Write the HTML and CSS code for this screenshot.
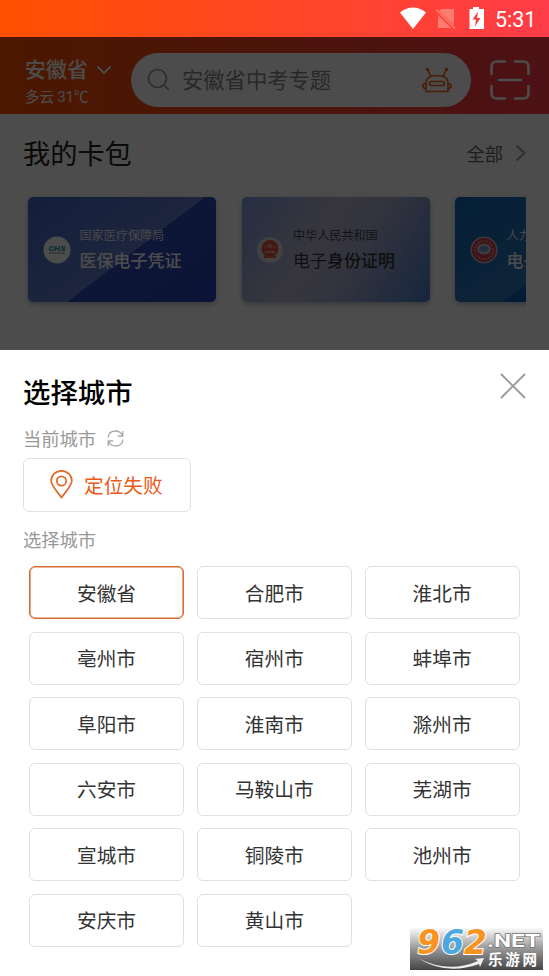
FILE: index.html
```html
<!DOCTYPE html>
<html lang="zh-CN">
<head>
<meta charset="utf-8">
<title>选择城市</title>
<link rel="stylesheet" href="styles.css">
</head>
<body>
<div class="status">
  <svg class="status-icons" width="108" height="37" viewBox="0 0 108 37">
    <path d="M0 12.500Q13 2.500 26 12.500L13 29Z" fill="#fff"/>
    <path d="M41 9h13v19H38V13Z" fill="#ff7d70"/>
    <path d="M36 10.500l19 18.500" stroke="#ff4438" stroke-width="4"/>
    <path d="M36.500 9.500l18.500 19" stroke="#ff8274" stroke-width="1.500"/>
    <path d="M73 7h6v2h5v20H69.500V9H73Z" fill="#fff"/>
    <path d="M78 11.500l-5.500 8h3.500l-1 7 5.500-8.500H77Z" fill="#f3433c"/>
  </svg>
  <span class="clock">5:31</span>
</div>
<div class="home">
  <header class="topbar">
    <div class="place">
      <div class="place-name">安徽省
        <svg width="16" height="10" viewBox="0 0 16 10"><path d="M1.500 1.500L8 8l6.500-6.500" class="stroke-white"/></svg>
      </div>
      <div class="weather">多云 31℃</div>
    </div>
    <div class="search">
      <svg width="24" height="24" viewBox="0 0 24 24" fill="none" stroke="#999" stroke-width="1.700"><circle cx="10.500" cy="10.500" r="9"/><path d="M17 17l5 5"/></svg>
      <span class="query">安徽省中考专题</span>
      <svg class="robot" width="30" height="26" viewBox="0 0 30 26" fill="none" stroke="#f26722" stroke-width="1.700"><path d="M4 24.500V16C4 11 8 8.500 15 8.500S26 11 26 16v8.500ZM8.500 9L6 3M21.500 9L24 3M4 16.500c-2.500 0-3 1-3 2.500s1 2.500 3 2.500M26 16.500c2.500 0 3 1 3 2.500s-1 2.500-3 2.500"/><rect x="7.500" y="14.500" width="15" height="4" rx="2"/><circle cx="5.500" cy="2.500" r="1" fill="#f26722"/><circle cx="24.500" cy="2.500" r="1" fill="#f26722"/></svg>
    </div>
    <svg class="scan" width="40" height="40" viewBox="0 0 40 40" fill="none" stroke="#fff" stroke-width="2.600" stroke-linecap="round"><path d="M1.500 14V7q0-5.500 5.500-5.500h8M25 1.500h8q5.500 0 5.500 5.500v7M38.500 26v7q0 5.500-5.500 5.500h-8M15 38.500H7Q1.500 38.500 1.500 33v-7M9 20h22"/></svg>
  </header>
  <section class="wallet">
    <div class="wallet-head">
      <h2>我的卡包</h2>
      <span class="all">全部</span>
      <svg width="11" height="18" viewBox="0 0 11 18"><path d="M1.500 1.500L9.500 9l-8 7.500" fill="none" stroke="#999" stroke-width="1.900"/></svg>
    </div>
    <div class="cards">
      <article class="card card-health">
        <svg class="seal" width="28" height="28" viewBox="0 0 28 28"><circle cx="14" cy="14" r="13.500" fill="#fff"/><text x="14" y="14.500" class="chs" textLength="17" lengthAdjust="spacingAndGlyphs">CHS</text><path d="M6 17h16" stroke="#99a" stroke-width="1.500" stroke-dasharray="1.500 .5"/></svg>
        <div class="card-text"><p class="issuer">国家医疗保障局</p><p class="doc">医保电子凭证</p></div>
      </article>
      <article class="card card-id">
        <svg class="seal" width="28" height="28" viewBox="0 0 28 28"><circle cx="14" cy="14" r="13" fill="#dad9e0"/><circle cx="14" cy="12.500" r="8.500" fill="#e4523f"/><path d="M14 7l1 2h2l-1.500 1.500.5 2-2-1-2 1 .5-2L11 9h2ZM9 15h10v2H9Z" fill="#eaa59c"/><path d="M8 19q6 4 12 0v3H8Z" fill="#e4523f"/><circle cx="9.500" cy="11" r="1" fill="#eaa59c"/><circle cx="18.500" cy="11" r="1" fill="#eaa59c"/></svg>
        <div class="card-text"><p class="issuer">中华人民共和国</p><p class="doc">电子<b>身份证明</b></p></div>
      </article>
      <article class="card card-social">
        <svg class="seal" width="28" height="28" viewBox="0 0 28 28"><circle cx="14" cy="14" r="13.500" fill="#c9bfce"/><circle cx="14" cy="14" r="12" fill="#cf3b45"/><circle cx="14" cy="14" r="9" fill="none" stroke="#e8a6ac" stroke-width="2" stroke-dasharray="1.500 1.500"/><ellipse cx="14" cy="13" rx="7" ry="5.500" fill="#c5c5d6"/><ellipse cx="14" cy="13" rx="4.500" ry="3" fill="#6c9fc6"/></svg>
        <div class="card-text"><p class="issuer">人力</p><p class="doc">电子</p></div>
      </article>
    </div>
  </section>
  <div class="mask"></div>
</div>
<main class="sheet">
  <div class="sheet-head">
    <h1>选择城市</h1>
    <svg width="26" height="26" viewBox="0 0 26 26"><path d="M1 1l24 24M25 1L1 25" stroke="#999" stroke-width="1.800"/></svg>
  </div>
  <div class="label">当前城市
    <svg width="17" height="17" viewBox="0 0 17 17" fill="none" stroke="#aaa" stroke-width="1.300"><path d="M1 7.500C1.500 3.500 4.500 1 8.500 1c3 0 5.500 1.500 7 4.500M15.800 1v5h-5M16 9.500c-.5 4-3.500 6.500-7.500 6.500-3 0-5.500-1.500-7-4.500M1.200 16v-5h5"/></svg>
  </div>
  <div class="locate">
    <svg width="23" height="29" viewBox="0 0 23 29" fill="none" stroke="#e3682e" stroke-width="1.700"><path d="M11.500 27.500C6 20 1.200 15.500 1.200 10.800a10.300 10 0 0 1 20.600 0C21.800 15.500 17 20 11.500 27.500Z"/><circle cx="11.500" cy="11" r="4.700"/></svg>
    <span>定位失败</span>
  </div>
  <div class="label label-pick">选择城市</div>
  <div class="grid">
    <div class="city city-on">安徽省</div><div class="city">合肥市</div><div class="city">淮北市</div>
    <div class="city">亳州市</div><div class="city">宿州市</div><div class="city">蚌埠市</div>
    <div class="city">阜阳市</div><div class="city">淮南市</div><div class="city">滁州市</div>
    <div class="city">六安市</div><div class="city">马鞍山市</div><div class="city">芜湖市</div>
    <div class="city">宣城市</div><div class="city">铜陵市</div><div class="city">池州市</div>
    <div class="city">安庆市</div><div class="city">黄山市</div>
  </div>
</main>
<svg class="watermark" width="133" height="43" viewBox="0 0 133 43">
  <defs>
    <linearGradient id="shade" x2="0" y2="1"><stop offset="0" stop-color="#fff"/><stop offset=".5" stop-color="#999"/><stop offset="1" stop-color="#444"/></linearGradient>
  </defs>
  <rect width="133" height="43" fill="url(#shade)"/>
  <text y="27" class="digits"><tspan x="7" fill="#f7931e">9</tspan><tspan x="31" fill="#4ba9e0">6</tspan><tspan x="54" fill="#f7931e">2</tspan></text>
  <text x="77" y="20" class="net" textLength="53" lengthAdjust="spacingAndGlyphs">.NET</text>
  <path d="M8 31Q38 47 68 34l-3-2 9-1-4 9-1-3Q36 49 8 31Z" fill="#eee"/>
  <text x="78" y="38" class="site" textLength="49">乐游网</text>
</svg>
</body>
</html>
```
FILE: styles.css
```css
* { box-sizing: border-box; }
body {
  margin: 0;
  width: 549px;
  height: 976px;
  overflow: hidden;
  position: relative;
  background: #fff;
  color: #333;
  font-family: Roboto, "Noto Sans CJK SC", sans-serif;
}
svg { display: block; flex: none; }
h1, h2, p { margin: 0; }
.status {
  height: 37px;
  display: flex;
  align-items: center;
  padding-left: 400px;
  background: linear-gradient(90deg, #ff5000, #ff3c48);
}
.status-icons { width: 108px; margin-right: -13px; }
.clock { color: #fff; font-size: 21.5px; line-height: 37px; padding-top: 1px; }

.home { height: 313px; position: relative; background: #fff; overflow: hidden; }
.mask { position: absolute; inset: 0; background: rgba(0, 0, 0, .7); }
.topbar {
  height: 77px;
  display: flex;
  padding-left: 25px;
  background: linear-gradient(90deg, #ff5000, #ff3c48);
}
.place { width: 106px; color: #fff; padding-top: 19px; }
.place-name {
  display: flex;
  align-items: center;
  gap: 8px;
  font-size: 21px;
  font-weight: 500;
  line-height: 28px;
}
.stroke-white { fill: none; stroke: #fff; stroke-width: 1.8; }
.weather { font-size: 14.5px; line-height: 27px; }
.search {
  width: 340px;
  height: 54px;
  margin-top: 16px;
  padding: 0 19px 0 16px;
  border-radius: 27px;
  display: flex;
  align-items: center;
  background: #fff;
}
.query { margin-left: 11px; flex: 1; padding-top: 2px; font-size: 21.3px; line-height: 52px; color: #888; white-space: nowrap; }
.scan { margin: 23px 0 0 19px; }

.wallet { padding: 0 23px; }
.wallet-head { height: 78px; display: flex; align-items: center; }
.wallet-head h2 { flex: 1; font-size: 27.2px; font-weight: 400; color: #222; padding-bottom: 2px; }
.all { font-size: 18.3px; color: #666; margin-right: 12px; padding-bottom: 1px; }
.cards {
  display: flex;
  gap: 25.5px;
  padding: 5px 0 12px 5px;
  overflow: hidden;
}
.card {
  flex: none;
  width: 188px;
  height: 105px;
  border-radius: 5px;
  padding-left: 14.5px;
  display: flex;
  align-items: center;
  color: #fff;
  white-space: nowrap;
  box-shadow: 0 2px 5px rgba(40, 60, 110, .35);
}
.seal { margin-right: 9px; }
.card-text { padding-top: 3px; }
.issuer { font-size: 12.1px; line-height: 20px; opacity: .85; }
.doc { font-size: 17px; line-height: 31px; font-weight: 500; }
.card-health { background: linear-gradient(142.7deg, #4465c4, #647fcf 54%, #2f4cb8 54.5%, #253fb4); }
.card-id { background: linear-gradient(120deg, #7f9ddb, #b9b5ce 40%, #a9acd0 60%, #4b80cb); color: #333; }
.card-id .doc { font-weight: 400; }
.card-id b { font-weight: 500; }
.card-social { background: linear-gradient(145deg, #1169b8, #2d77bc 58%, #075fba 58.5%); }

.sheet { height: 626px; padding: 0 23px; background: #fff; }
.sheet-head { height: 77px; display: flex; justify-content: space-between; }
.sheet-head h1 { font-size: 27.4px; line-height: 40px; margin-top: 24px; font-weight: 500; color: #000; }
.sheet-head svg { margin-top: 23px; }
.label {
  height: 22px;
  display: flex;
  align-items: center;
  gap: 11px;
  font-size: 18.3px;
  color: #999;
}
.locate {
  width: 168px;
  height: 54px;
  margin-top: 9px;
  padding: 0 0 2px 26px;
  border: 1px solid #e0e0e0;
  border-radius: 6px;
  display: flex;
  align-items: center;
  gap: 11px;
  font-size: 19.7px;
  color: #e85b18;
}
.label-pick { margin-top: 16px; }
.grid {
  margin: 16px 6px 0;
  display: grid;
  grid-template-columns: repeat(3, 155px);
  grid-auto-rows: 53px;
  gap: 12.6px 12.8px;
}
.city {
  border: 1px solid #e0e0e0;
  border-radius: 6px;
  display: flex;
  align-items: center;
  justify-content: center;
  padding-bottom: 1px;
  font-size: 19.7px;
  color: #333;
}
.city-on { border-color: #d96a35; box-shadow: inset 0 0 0 .6px #d96a35; }

.watermark { position: absolute; left: 410px; top: 927px; }
.digits { font: italic 700 33px "DejaVu Sans", sans-serif; stroke: #fff; stroke-width: 2px; paint-order: stroke; }
.net { font: 700 19px Roboto, sans-serif; fill: #fff; stroke: #777; stroke-width: 1.5px; paint-order: stroke; }
.site { font: 700 14.5px "Noto Sans CJK SC", sans-serif; fill: #fff; }
.chs { font: italic 900 7px Roboto, sans-serif; fill: #16a0b5; text-anchor: middle; }
```
